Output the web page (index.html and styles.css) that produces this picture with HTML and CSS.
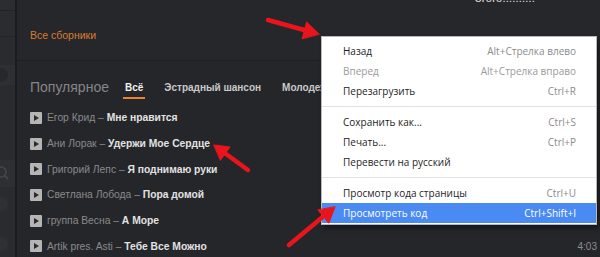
FILE: index.html
```html
<!DOCTYPE html>
<html lang="ru">
<head>
<meta charset="utf-8">
<title>Популярное</title>
<link rel="stylesheet" href="styles.css">
</head>
<body>
<div class="app">
  <aside class="sidebar">
    <div class="sb-block sb-top"></div>
    <div class="sb-block sb-nav"></div>
    <div class="sb-gap"></div>
    <div class="sb-block sb-avatar"><span class="sb-circle"></span></div>
    <div class="sb-gap sb-gap-lg"></div>
    <div class="sb-block sb-search">
      <svg class="sb-icon" width="10" height="16" viewBox="0 0 10 16"><circle cx="1" cy="7" r="5" fill="none" stroke="#45464b" stroke-width="1.6"/><line x1="4.5" y1="10.5" x2="8" y2="14" stroke="#45464b" stroke-width="1.8"/></svg>
    </div>
    <div class="sb-item"><span class="sb-circle"></span></div>
    <div class="sb-item"><span class="sb-circle"></span></div>
  </aside>
  <main class="main">
    <header class="top">
      <div class="user">Згого..........</div>
      <a class="all-link">Все сборники</a>
    </header>
    <section class="popular">
      <div class="popular-head">
        <h2 class="popular-title">Популярное</h2>
        <nav class="tabs">
          <a class="tab tab-active">Всё</a>
          <a class="tab">Эстрадный шансон</a>
          <a class="tab">Молодежная</a>
        </nav>
      </div>
      <ul class="tracks">
        <li class="track"><span class="play"></span><span class="artist">Егор Крид – </span><span class="song">Мне нравится</span><span class="time">3:41</span></li>
        <li class="track"><span class="play"></span><span class="artist">Ани Лорак – </span><span class="song">Удержи Мое Сердце</span><span class="time">3:37</span></li>
        <li class="track"><span class="play"></span><span class="artist">Григорий Лепс – </span><span class="song">Я поднимаю руки</span><span class="time">3:55</span></li>
        <li class="track"><span class="play"></span><span class="artist">Светлана Лобода – </span><span class="song">Пора домой</span><span class="time">3:29</span></li>
        <li class="track"><span class="play"></span><span class="artist">группа Весна – </span><span class="song">А Море</span><span class="time">3:48</span></li>
        <li class="track"><span class="play"></span><span class="artist">Artik pres. Asti – </span><span class="song">Тебе Все Можно</span><span class="time">4:03</span></li>
      </ul>
    </section>
  </main>
</div>

<div class="menu">
  <div class="menu-item"><span>Назад</span><span class="key">Alt+Стрелка влево</span></div>
  <div class="menu-item disabled"><span>Вперед</span><span class="key">Alt+Стрелка вправо</span></div>
  <div class="menu-item"><span>Перезагрузить</span><span class="key">Ctrl+R</span></div>
  <div class="menu-sep"></div>
  <div class="menu-item"><span>Сохранить как...</span><span class="key">Ctrl+S</span></div>
  <div class="menu-item"><span>Печать...</span><span class="key">Ctrl+P</span></div>
  <div class="menu-item"><span>Перевести на русский</span></div>
  <div class="menu-sep"></div>
  <div class="menu-item"><span>Просмотр кода страницы</span><span class="key">Ctrl+U</span></div>
  <div class="menu-item active"><span>Просмотреть код</span><span class="key">Ctrl+Shift+I</span></div>
</div>

<svg class="arrows" width="600" height="257" viewBox="0 0 600 257">
  <g fill="#ea151c" stroke="#ea151c" stroke-linecap="round">
    <line x1="268" y1="20" x2="306" y2="30.5" stroke-width="4.5"/>
    <polygon points="319,34 306.6,22 302.2,38.5" stroke-width="1" stroke-linejoin="round"/>
    <line x1="248" y1="170" x2="224" y2="152.5" stroke-width="4.5"/>
    <polygon points="214,145 230,147 220.6,160" stroke-width="1" stroke-linejoin="round"/>
    <line x1="289" y1="245" x2="322" y2="217.5" stroke-width="4.5"/>
    <polygon points="335,207 328.8,223.2 318,210.2" stroke-width="1" stroke-linejoin="round"/>
  </g>
</svg>
</body>
</html>
```

FILE: styles.css
```css
* { box-sizing: border-box; margin: 0; padding: 0; }

html, body {
  width: 600px;
  height: 257px;
  overflow: hidden;
  background: #25262a;
}

body {
  font-family: "Liberation Sans", Arial, sans-serif;
  position: relative;
}

.app {
  display: flex;
  height: 257px;
  overflow: hidden;
}

/* sidebar */
.sidebar {
  width: 17px;
  flex: none;
  background: #2a2b2f;
  border-right: 2px solid #1b1c1f;
  display: flex;
  flex-direction: column;
  overflow: hidden;
}
.sb-block { border-bottom: 1px solid #222327; flex: none; }
.sb-top { height: 11px; background: #2c2d31; }
.sb-nav { height: 26px; background: #2b2c30; }
.sb-gap { height: 28px; flex: none; }
.sb-gap-lg { height: 75px; }
.sb-avatar {
  height: 20px;
  background: #2e2f33;
  border-bottom: none;
  position: relative;
}
.sb-circle {
  position: absolute;
  left: -6px;
  top: 3px;
  width: 14px;
  height: 14px;
  border-radius: 50%;
  background: #27282b;
}
.sb-search {
  height: 27px;
  background: #2e2f33;
  border-bottom: none;
  padding-top: 5px;
}
.sb-icon { display: block; }
.sb-item {
  height: 40px;
  flex: none;
  position: relative;
}
.sb-item .sb-circle { top: 10px; background: #2f3034; }

/* main */
.main {
  flex: 1;
  display: flex;
  flex-direction: column;
  min-width: 0;
}

.top {
  flex: none;
  height: 61px;
  border-bottom: 1px solid #1e1f22;
  background: #26272b;
  padding-left: 13px;
  display: flex;
  flex-direction: column;
}
.user {
  color: #e6e6e6;
  font-size: 11px;
  line-height: 12px;
  margin-top: -8px;
  margin-left: 445px;
  letter-spacing: 0.2px;
}
.all-link {
  color: #db7a2e;
  font-size: 10.5px;
  margin-top: 24px;
  line-height: 14px;
}

.popular {
  flex: none;
  padding-left: 13px;
  padding-right: 3px;
}
.popular-head {
  display: flex;
  align-items: center;
  height: 36px;
  margin-top: 8px;
}
.popular-title {
  font-weight: normal;
  font-size: 14px;
  color: #868686;
  margin-right: 16px;
}
.tabs {
  display: flex;
  gap: 21px;
  white-space: nowrap;
}
.tab {
  font-size: 10px;
  font-weight: bold;
  color: #c9c9c9;
  position: relative;
}
.tab-active { color: #f2f2f2; }
.tab-active::after {
  content: "";
  position: absolute;
  left: -2px;
  right: -2px;
  bottom: -6px;
  height: 2px;
  background: #e8832c;
}

.tracks {
  list-style: none;
}
.track {
  display: flex;
  align-items: center;
  height: 25.7px;
  font-size: 10.3px;
  white-space: nowrap;
}
.play {
  width: 12px;
  height: 12px;
  border-radius: 1px;
  background: #b5b5b5;
  margin-right: 5px;
  position: relative;
  flex: none;
}
.play::after {
  content: "";
  position: absolute;
  left: 4px;
  top: 3px;
  border-left: 5px solid #2b2b2e;
  border-top: 3px solid transparent;
  border-bottom: 3px solid transparent;
}
.artist { color: #8a8a8a; white-space: pre; }
.song { color: #e2e2e2; font-weight: bold; }
.time {
  margin-left: auto;
  color: #8e8e8e;
  font-size: 10px;
}

/* context menu */
.menu {
  position: absolute;
  left: 321px;
  top: 36px;
  width: 276px;
  height: 189px;
  background: #ffffff;
  border: 1px solid #b9b9b9;
  box-shadow: 2px 3px 5px rgba(0, 0, 0, 0.45);
  padding-top: 4px;
  font-family: "Open Sans", "Noto Sans", sans-serif;
  font-size: 10px;
}
.menu-item {
  height: 20px;
  display: flex;
  align-items: center;
  justify-content: space-between;
  padding: 0 20px 0 21px;
  color: #1e1e1e;
}
.menu-item .key { color: #8c8c8c; }
.menu-item.disabled { color: #9a9a9a; }
.menu-item.disabled .key { color: #9a9a9a; }
.menu-item.active {
  background: #4a8af3;
  color: #ffffff;
}
.menu-item.active .key { color: #ffffff; }
.menu-sep {
  height: 11px;
  display: flex;
  align-items: center;
}
.menu-sep::before {
  content: "";
  flex: 1;
  height: 1px;
  background: #e3e3e3;
}

.arrows {
  position: absolute;
  left: 0;
  top: 0;
  pointer-events: none;
}
```
